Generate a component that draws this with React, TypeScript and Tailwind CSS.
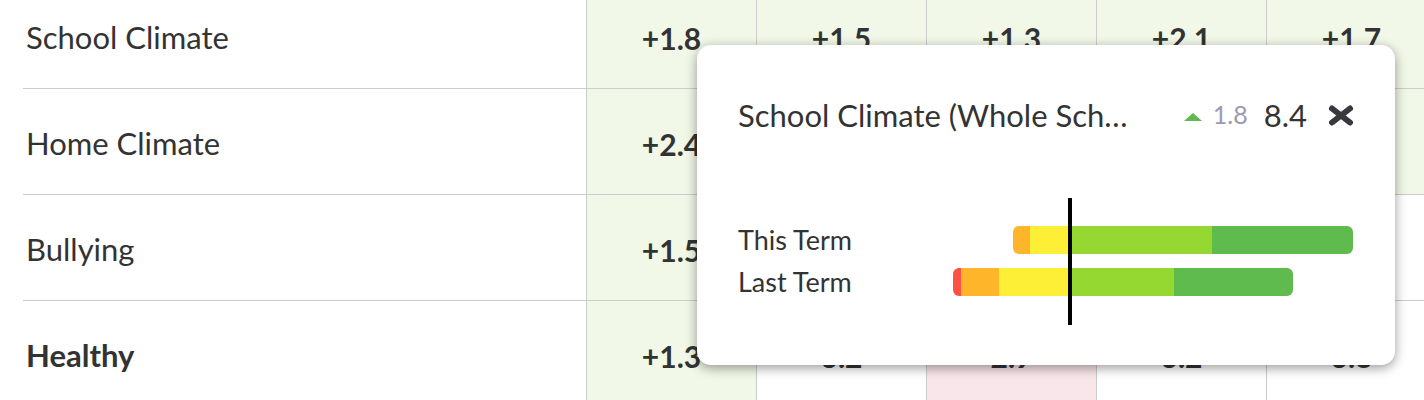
import React from 'react'

type Row = { label: string; bold?: boolean; cells: { v: string; bg: string }[] }

const G = 'bg-[#f1f8e8]'
const W = 'bg-white'
const P = 'bg-[#f8e6ea]'

const rows: Row[] = [
  { label: 'School Climate', cells: [{ v: '+1.8', bg: G }, { v: '+1.5', bg: G }, { v: '+1.3', bg: G }, { v: '+2.1', bg: G }, { v: '+1.7', bg: G }] },
  { label: 'Home Climate', cells: [{ v: '+2.4', bg: G }, { v: '+1.9', bg: G }, { v: '+2.2', bg: G }, { v: '+1.6', bg: G }, { v: '+2.0', bg: G }] },
  { label: 'Bullying', cells: [{ v: '+1.5', bg: G }, { v: '6.1', bg: W }, { v: '5.8', bg: W }, { v: '6.0', bg: W }, { v: '6.3', bg: W }] },
  { label: 'Healthy', bold: true, cells: [{ v: '+1.3', bg: G }, { v: '6.2', bg: W }, { v: '2.9', bg: P }, { v: '6.2', bg: W }, { v: '6.8', bg: W }] },
]

const bars = [
  { label: 'This Term', offset: 73, segs: [['#feb52a', 17], ['#fcef36', 39], ['#96d832', 143], ['#60bb4f', 141]] },
  { label: 'Last Term', offset: 13, segs: [['#ff5044', 8], ['#feb52a', 38], ['#fcef36', 70], ['#96d832', 105], ['#60bb4f', 119]] },
] as const

function Popup() {
  return (
    <div className="absolute left-[697px] top-[45px] w-[698px] h-[320px] bg-white rounded-[14px] shadow-[0_3px_12px_rgba(0,0,0,0.4)] px-[41px] pt-[50px]">
      <div className="flex items-center h-10">
        <div className="w-[400px] truncate text-[31px] text-[#333]">School Climate (Whole School)</div>
        <div className="ml-auto flex items-center">
          <svg width="18" height="8" viewBox="0 0 18 8" className="mt-[4px]"><polygon points="9,0 18,8 0,8" fill="#5fb94f" /></svg>
          <span className="ml-[11px] text-[25px] text-[#9c9ab3]">1.8</span>
          <span className="ml-[16px] text-[31px] text-[#333]">8.4</span>
          <svg width="26" height="21" viewBox="0 0 26 21" className="ml-[21px]">
            <path d="M4 3.5 L22 17.5 M22 3.5 L4 17.5" stroke="#38383e" strokeWidth="6" strokeLinecap="round" />
          </svg>
        </div>
      </div>
      <div className="relative mt-[63px] h-[127px] pt-[28px]">
        {bars.map((b, i) => (
          <div key={b.label} className={`flex items-center h-[28px] ${i > 0 ? 'mt-[14px]' : ''}`}>
            <div className="w-[202px] text-[27px] text-[#333]">{b.label}</div>
            <div className="flex h-[28px] rounded-[6px] overflow-hidden" style={{ marginLeft: b.offset }}>
              {b.segs.map(([c, w], j) => (
                <div key={j} style={{ width: w, background: c }} />
              ))}
            </div>
          </div>
        ))}
        <div className="absolute left-[330px] top-0 w-[4px] h-[127px] bg-black" />
      </div>
    </div>
  )
}

export default function App() {
  return (
    <div className="relative h-[400px] w-[1424px] overflow-hidden bg-white font-['Lato',sans-serif] text-[#333]">
      <div className="-mt-[17px]">
        {rows.map((r) => (
          <div key={r.label} className="flex h-[106px]">
            <div className="w-[586px] pl-[23px] shrink-0">
              <div className={`h-full border-b border-[#cccccc] flex items-center pl-[3px] pt-[4px] text-[31px] ${r.bold ? 'font-bold' : ''}`}>
                {r.label}
              </div>
            </div>
            {r.cells.map((c, i) => (
              <div key={i} className={`w-[170px] shrink-0 border-l border-b border-[#cccccc] flex items-center justify-center pt-[6px] text-[30px] font-bold ${c.bg}`}>
                {c.v}
              </div>
            ))}
          </div>
        ))}
      </div>
      <Popup />
    </div>
  )
}
